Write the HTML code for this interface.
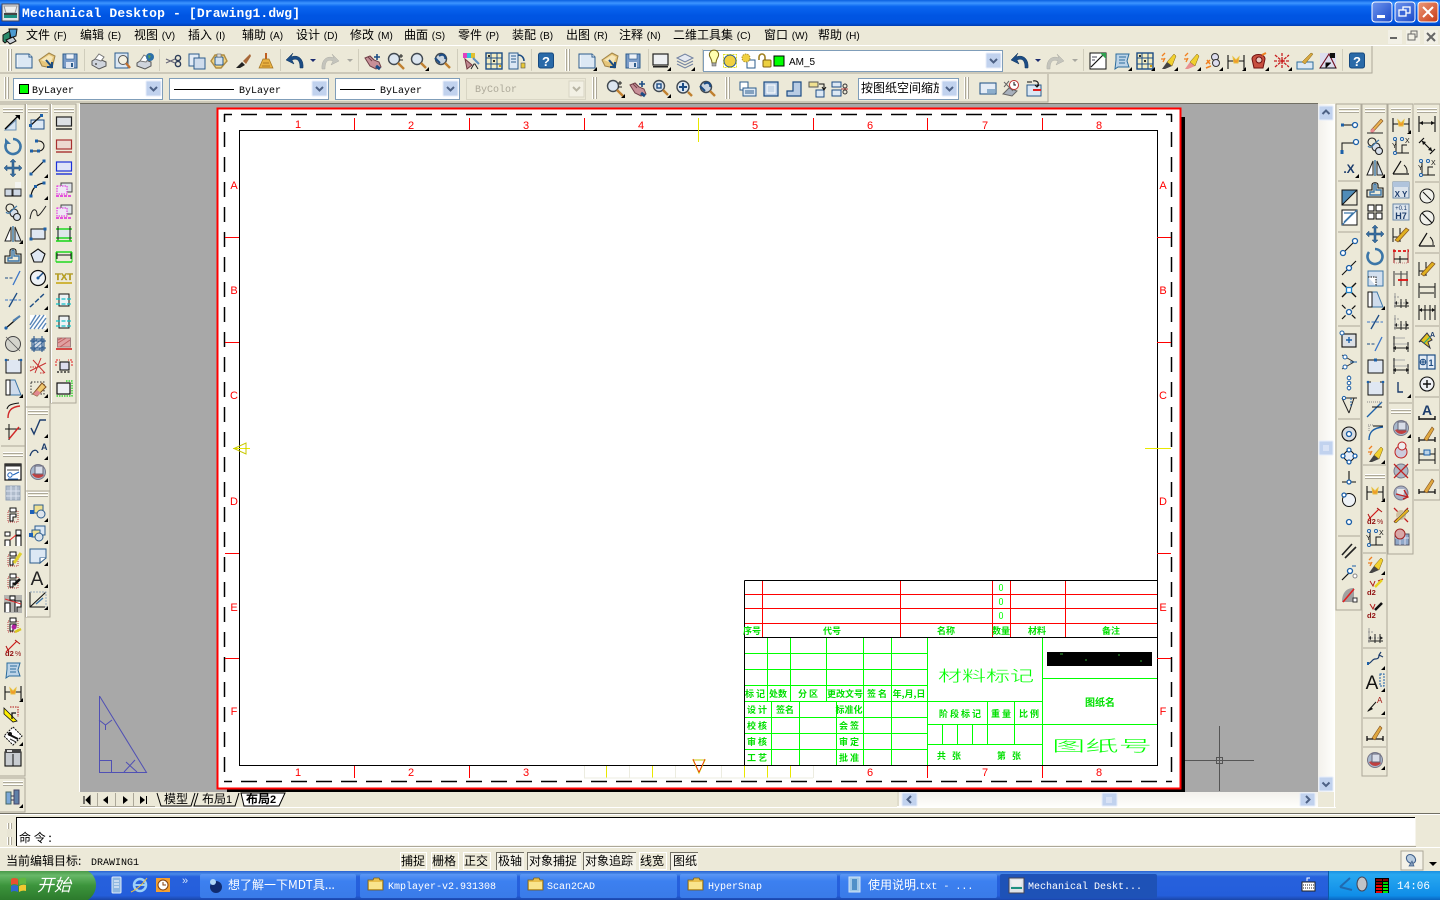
<!DOCTYPE html>
<html lang="zh">
<head>
<meta charset="utf-8">
<title>Mechanical Desktop</title>
<style>
html,body{margin:0;padding:0;width:1440px;height:900px;overflow:hidden;background:#ece9d8}
svg{display:block;position:absolute;left:0;top:0}
text{font-family:"WenQuanYi Zen Hei","Noto Sans CJK SC",sans-serif;font-size:12px;fill:#000}
.m{font-family:"Liberation Mono",monospace}
.s{font-family:"Liberation Sans",sans-serif}
.g{fill:#00ff00;font-size:9px;text-anchor:middle}
.gb{fill:#00e000;font-size:9px;text-anchor:middle;font-weight:bold}
.r{fill:#ff0000;font-family:"Liberation Sans",sans-serif;font-size:11px;text-anchor:middle}
.tb{fill:#fff;font-size:11px}
</style>
</head>
<body>
<svg width="1440" height="900" viewBox="0 0 1440 900" xmlns="http://www.w3.org/2000/svg" shape-rendering="geometricPrecision">
<defs>
<linearGradient id="tt" x1="0" y1="0" x2="0" y2="1"><stop offset="0" stop-color="#0a5fe0"/><stop offset=".12" stop-color="#3d95ff"/><stop offset=".25" stop-color="#0a66f0"/><stop offset=".6" stop-color="#0055e3"/><stop offset=".88" stop-color="#0054e0"/><stop offset="1" stop-color="#003cb0"/></linearGradient>
<linearGradient id="task" x1="0" y1="0" x2="0" y2="1"><stop offset="0" stop-color="#2a62d0"/><stop offset=".1" stop-color="#4a8ae8"/><stop offset=".2" stop-color="#2761dd"/><stop offset=".85" stop-color="#245edb"/><stop offset="1" stop-color="#1a46a8"/></linearGradient>
<linearGradient id="start" x1="0" y1="0" x2="0" y2="1"><stop offset="0" stop-color="#4a9a4a"/><stop offset=".15" stop-color="#68b868"/><stop offset=".5" stop-color="#3c943c"/><stop offset="1" stop-color="#2c7a2c"/></linearGradient>
<linearGradient id="tray" x1="0" y1="0" x2="0" y2="1"><stop offset="0" stop-color="#1a90e0"/><stop offset=".12" stop-color="#28a8f0"/><stop offset=".85" stop-color="#0f8de8"/><stop offset="1" stop-color="#0a66c0"/></linearGradient>
<linearGradient id="btn" x1="0" y1="0" x2="0" y2="1"><stop offset="0" stop-color="#5a96f5"/><stop offset=".3" stop-color="#3c80f0"/><stop offset="1" stop-color="#3a7be8"/></linearGradient>
<linearGradient id="wb" x1="0" y1="0" x2="1" y2="1"><stop offset="0" stop-color="#6f96ee"/><stop offset="1" stop-color="#1a48c8"/></linearGradient>
<linearGradient id="wc" x1="0" y1="0" x2="1" y2="1"><stop offset="0" stop-color="#ec9a7a"/><stop offset="1" stop-color="#c83a14"/></linearGradient>
<linearGradient id="sbv" x1="0" y1="0" x2="1" y2="0"><stop offset="0" stop-color="#f3f1ec"/><stop offset="1" stop-color="#fefefb"/></linearGradient>
<linearGradient id="sbh" x1="0" y1="0" x2="0" y2="1"><stop offset="0" stop-color="#f3f1ec"/><stop offset="1" stop-color="#fefefb"/></linearGradient>

<!-- helpers -->
<path id="f" d="M6 10L10 10 10 6Z" fill="#000"/>
<g id="grh"><rect x="0" y="0" width="20" height="1" fill="#fff"/><rect x="0" y="1" width="20" height="1" fill="#aca899"/><rect x="0" y="3" width="20" height="1" fill="#fff"/><rect x="0" y="4" width="20" height="1" fill="#aca899"/></g>
<g id="grv"><rect x="0" y="0" width="1" height="22" fill="#fff"/><rect x="1" y="0" width="1" height="22" fill="#aca899"/><rect x="3" y="0" width="1" height="22" fill="#fff"/><rect x="4" y="0" width="1" height="22" fill="#aca899"/></g>
<g id="cb"><rect x="0" y="0" width="15" height="15" rx="1" fill="#c1d2ee" stroke="#e8eefa"/><path d="M4 6L7.5 9.5 11 6" fill="none" stroke="#4d6185" stroke-width="2"/></g>

<!-- standard toolbar -->
<g id="new"><path d="M-8-7H5L8-4V7H-8Z" fill="#dce8f4" stroke="#2c5c8c"/><path d="M5-7V-4H8" fill="#fff" stroke="#2c5c8c"/><path d="M-7 6V-6" stroke="#fff"/></g>
<g id="open"><path d="M-8-1L2-8 8-5 5 7-5 5Z" fill="#e6c67a" stroke="#a08448"/><path d="M-6-1L2-6 6-4 3 3Z" fill="#f5e6b8"/><path d="M-1-1L5 6M5 1V6H0" fill="none" stroke="#1c4c80" stroke-width="2"/></g>
<g id="save"><rect x="-7" y="-7" width="14" height="14" fill="#7b9cc8" stroke="#2c5c8c"/><rect x="-4" y="-7" width="8" height="5" fill="#eef2f8" stroke="#2c5c8c" stroke-width=".6"/><rect x="-4" y="1" width="8" height="6" fill="#dfe6f2"/><rect x="1" y="2" width="2" height="4" fill="#2c5c8c"/></g>
<g id="print"><path d="M-7 0L-2-3 7 1V5L0 8-7 4Z" fill="#cfd4dc" stroke="#555"/><path d="M-4-2L0-7 5-4 2 0Z" fill="#fff" stroke="#777"/><circle cx="-3" cy="3" r="1" fill="#555"/></g>
<g id="prev"><rect x="-7" y="-8" width="13" height="15" fill="#dce8f4" stroke="#2c5c8c"/><circle cx="1" cy="-1" r="4.5" fill="#f4f0e0" stroke="#555"/><path d="M4 2L8 7" stroke="#c07030" stroke-width="2.4"/></g>
<g id="plot"><path d="M-8 2L-2-2 6 1V5L0 8-8 5Z" fill="#cfd4dc" stroke="#555"/><path d="M-5 0L-1-6 4-3 1 1Z" fill="#fff" stroke="#777"/><circle cx="5" cy="-4" r="4" fill="#2c70a8"/><path d="M3-6L6-5 4-2Z" fill="#5aa050"/></g>
<g id="cut"><circle cx="4" cy="-3" r="2.6" fill="none" stroke="#2c3c58" stroke-width="1.4"/><circle cx="4" cy="3" r="2.6" fill="none" stroke="#2c3c58" stroke-width="1.4"/><path d="M1-2L-8 2M1 2L-8-2" stroke="#667" stroke-width="1.2"/></g>
<g id="copy"><rect x="-8" y="-7" width="10" height="12" fill="#e3ecf6" stroke="#2c5c8c"/><rect x="-3" y="-3" width="11" height="11" fill="#cfdcec" stroke="#2c5c8c"/></g>
<g id="paste"><path d="M-8 0L-4-6 5-6 8 0 2 7-3 7Z" fill="#f4d480" stroke="#b08c40" stroke-width="1.4"/><rect x="-4" y="-4" width="8" height="8" rx="1" fill="#cfe0f0" stroke="#2c5c8c"/><rect x="-2" y="-7" width="4" height="3" fill="#ddd" stroke="#555" stroke-width=".5"/></g>
<g id="brush"><path d="M-7 7L-1 1 2 4-3 7Z" fill="#222"/><path d="M0 0L7-7 8-5 3 3Z" fill="#a86838"/></g>
<g id="broom"><rect x="-1" y="-8" width="2" height="7" fill="#c06020"/><path d="M-3-2H3L7 7H-7Z" fill="#e8b040" stroke="#a07020" stroke-width=".7"/><path d="M-3 2H3M-4 5H4" stroke="#b07820"/></g>
<path id="undo" d="M8 7C9-2 3-7-4-4L-2-8-9-1-1 3-3-1C2-3 5-1 5 7Z" fill="#1c4c84" stroke="#12365e" stroke-width=".5"/>
<path id="redo" d="M-8 7C-9-2-3-7 4-4L2-8 9-1 1 3 3-1C-2-3-5-1-5 7Z" fill="#c4c4bc" stroke="#aeaea6" stroke-width=".5"/>
<path id="dn" d="M-3-1H3L0 2Z" fill="#1c2c70"/>
<path id="dng" d="M-3-1H3L0 2Z" fill="#a8a8a0"/>
<g id="pan"><path d="M-8-3L-3-5 1-1 6 1 8 6 3 8-3 5Z" fill="#c89098" stroke="#704048"/><path d="M-5-4L-1 0M-3-5L1-1" stroke="#704048"/><path d="M3 5L7 8" stroke="#1c4c84" stroke-width="3"/><path d="M4-7V-1M1-4H7" stroke="#1c4c84" stroke-width="1.6"/></g>
<g id="zr"><circle cx="-2" cy="-2" r="5.5" fill="#dce6f0" stroke="#404850" stroke-width="1.4"/><path d="M2 2L8 8" stroke="#c08030" stroke-width="2.4"/><path d="M5-7V-3M3-5H7M3-1H7" stroke="#222"/></g>
<g id="zw"><circle cx="-2" cy="-2" r="5.5" fill="#dce6f0" stroke="#404850" stroke-width="1.4"/><path d="M2 2L7 7" stroke="#c08030" stroke-width="2.4"/><use href="#f"/></g>
<g id="zp"><circle cx="-1" cy="-1" r="5.5" fill="#c8d4e0" stroke="#404850" stroke-width="1.4"/><path d="M3 3L8 8" stroke="#c08030" stroke-width="2.4"/><path d="M-7-2L-2 3M-3-4C1-7 4-4 3-1" fill="none" stroke="#1c4c84" stroke-width="2"/></g>
<g id="zf"><circle cx="-1" cy="-1" r="6" fill="#dce6f0" stroke="#404850" stroke-width="1.4"/><path d="M-1-5V3M-5-1H3" stroke="#1c4c84" stroke-width="2"/><path d="M4 4L8 8" stroke="#c08030" stroke-width="2.4"/></g>
<g id="zo"><circle cx="-2" cy="-2" r="5.5" fill="#dce6f0" stroke="#404850" stroke-width="1.4"/><rect x="-4" y="-4" width="4" height="4" fill="none" stroke="#1c4c84" stroke-width="1.4"/><path d="M2 2L7 7" stroke="#c08030" stroke-width="2.4"/><use href="#f"/></g>
<g id="pal"><rect x="-8" y="-8" width="12" height="5" fill="#e040c0"/><rect x="-4" y="-8" width="4" height="5" fill="#30c0e0"/><rect x="0" y="-8" width="4" height="5" fill="#e0c030"/><path d="M-6-2L1 4-4 8Z" fill="#c08890" stroke="#703840"/><path d="M2-3L8 3" stroke="#6090c0" stroke-width="2"/><path d="M0 8L3 3H4L7 8" fill="none" stroke="#222"/></g>
<g id="grd"><rect x="-8" y="-8" width="16" height="16" fill="#f4ecc0" stroke="#1c4c84" stroke-width="1.4"/><path d="M-3-8V8M3-8V8M-8-3H8M-8 3H8" stroke="#1c4c84"/><rect x="-6" y="-6" width="2" height="2" fill="#303030"/><rect x="-1" y="-1" width="2" height="2" fill="#303030"/><rect x="5" y="4" width="2" height="2" fill="#d0a010"/></g>
<g id="bl"><rect x="-8" y="-8" width="9" height="16" fill="#dce8f4" stroke="#2c5c8c"/><path d="M-6-5H-1M-6-2H-1M-6 1H-1" stroke="#2c5c8c"/><path d="M1-6C5-6 7-3 7 0" fill="none" stroke="#1c4c84" stroke-width="1.6"/><rect x="4" y="2" width="4" height="5" fill="#e8c838" stroke="#555" stroke-width=".6"/></g>
<g id="hlp"><rect x="-7.5" y="-8" width="15" height="15" rx="2" fill="#2a6aa8" stroke="#174a80"/><text x="0" y="5" text-anchor="middle" class="s" style="font-size:13px;font-weight:bold;fill:#fff">?</text></g>
<g id="mon"><rect x="-8" y="-7" width="15" height="11" fill="#eef0f2" stroke="#222" stroke-width="1.2"/><rect x="-8" y="5" width="15" height="1.500" fill="#222"/><use href="#f"/></g>
<g id="lay"><path d="M-8-3L0-7 8-3 0 1Z" fill="#e4e8f0" stroke="#7080a0"/><path d="M-8 0L0 4 8 0M-8 3L0 7 8 3" fill="none" stroke="#7080a0"/><use href="#f"/></g>
<g id="bulb"><path d="M-4-3A4.6 4.6 0 1 1 4-3C3-1 2 0 2 3H-2C-2 0-3-1-4-3Z" fill="#ffffb0" stroke="#786810" stroke-width="1"/><rect x="-2" y="3" width="4" height="3" fill="#aaa" stroke="#555" stroke-width=".5"/></g>
<g id="sun"><rect x="-6.5" y="-6.5" width="13" height="13" fill="none" stroke="#e0e020" stroke-dasharray="2 1"/><circle r="6" fill="#f0d040" stroke="#2c5c8c"/></g>
<g id="sun2"><rect x="-1" y="-1" width="8" height="8" fill="#fff" stroke="#2c5c8c"/><circle cx="-2" cy="-3" r="4" fill="#f0d040" stroke="#b09020" stroke-dasharray="1.5 1"/></g>
<g id="lock"><path d="M-6-1V-4A3 3 0 0 1 0-4V-1" fill="none" stroke="#a08020" stroke-width="1.6"/><rect x="-2" y="-1" width="8" height="7" rx="1" fill="#ecd040" stroke="#806010"/></g>

<!-- CAD draw -->
<g id="a1"><path d="M-8 7L3-3V7Z" fill="#d8e4f0" stroke="#6a90b4"/><path d="M-8 6L5-7" stroke="#000" stroke-width="1.3"/><path d="M2-8H7V-3Z" fill="#000"/></g>
<path id="rot" d="M0-7A7.5 7.5 0 1 1-6-4" fill="none" stroke="#3c76a8" stroke-width="2.6"/>
<g id="rota"><use href="#rot"/><path d="M-8-8V-2H-2Z" fill="#3c76a8"/></g>
<path id="mv" d="M0-9L3-6H1V-1H6V-3L9 0 6 3V1H1V6H3L0 9-3 6H-1V1H-6V3L-9 0-6-3V-1H-1V-6H-3Z" fill="#386ea0" stroke="#244c78" stroke-width=".5"/>
<g id="arr"><rect x="-8" y="-1" width="7" height="7" fill="#cfd8e4" stroke="#333"/><rect x="0" y="-1" width="8" height="7" fill="#cfd8e4" stroke="#333"/><path d="M-8 6H8" stroke="#000"/><rect x="2" y="-8" width="6" height="6" fill="#f4f4f0"/></g>
<g id="cpc"><circle cx="-3" cy="-4" r="4" fill="none" stroke="#222" stroke-width="1.1"/><circle cx="1" cy="1" r="4" fill="#d8e0ea" stroke="#222" stroke-width="1.1"/><circle cx="4" cy="5" r="3.5" fill="#d8e0ea" stroke="#222" stroke-width="1.1"/><path d="M-7 0C-4 4-2-2 4-6" fill="none" stroke="#3c76a8" stroke-width="1.2"/></g>
<g id="mir"><path d="M-2-7V7H-8Z" fill="#fff" stroke="#222"/><path d="M0-8V8" stroke="#3c76a8" stroke-width="1.4"/><path d="M2-7V7H8Z" fill="#d8e4f0" stroke="#222"/><use href="#f"/></g>
<g id="off"><path d="M-8 7V0H-3V-5C-3-8 3-8 3-5V-2H8V7Z" fill="none" stroke="#111" stroke-width="1.1"/><path d="M-5 5V2H-1V-5C-1-6 1-6 1-5V0H6V5Z" fill="none" stroke="#3c76a8" stroke-width="1.4"/></g>
<g id="bk1"><path d="M-8 0H0" stroke="#1c4c84" stroke-dasharray="3 1.5"/><path d="M0 7L7-7" stroke="#3c76c8" stroke-width="1.3"/></g>
<g id="bk2"><path d="M-8 0H8" stroke="#3c76c8" stroke-dasharray="3 1.5"/><path d="M-4 7L4-7" stroke="#1c4c84" stroke-width="1.3"/></g>
<g id="pl"><path d="M-7 6L7-6" stroke="#111" stroke-width="1.3"/><circle cx="-7" cy="6" r="1.6" fill="#1c60a8"/><path d="M0-1L7-6" stroke="#5080b0" stroke-width="2"/></g>
<g id="cg"><circle r="7.5" fill="#d4d4cc" stroke="#444" stroke-width="1"/><path d="M-7-7L7 7" stroke="#555" stroke-width=".8"/></g>
<g id="bx"><rect x="-7" y="-6" width="15" height="13" fill="#dfe7f2"/><path d="M-7-6V7H8V-6" fill="none" stroke="#111"/><path d="M-7-6H-4M5-6H8" stroke="#111"/><circle cx="-7" cy="-6" r="1.3" fill="#1c60a8"/><circle cx="8" cy="-6" r="1.3" fill="#1c60a8"/></g>
<g id="bx2"><rect x="-7" y="-6" width="15" height="13" fill="#dfe7f2" stroke="#111"/><rect x="-1" y="-7.5" width="3" height="3" fill="#1c60a8"/></g>
<g id="trp"><path d="M-7-8V7H8L2-8Z" fill="#cfdcec" stroke="#3c76a8"/><path d="M-7-8V7H-3V-8Z" fill="#fff" stroke="#111"/><use href="#f"/></g>
<g id="fil"><path d="M-6-1C-5-5-2-6 6-7" fill="none" stroke="#111"/><path d="M-5 8C-5 1-2-3 7-4" fill="none" stroke="#d02828" stroke-width="1.4"/></g>
<g id="cha"><path d="M-8-3H8M-4-8V8" stroke="#111"/><path d="M-4 7L6-5" stroke="#d02828" stroke-width="1.4"/></g>
<g id="rln"><rect x="-7" y="-3" width="13" height="9" fill="#dce8f4" stroke="#1c4c84"/><path d="M-8 3L4-8" stroke="#111" stroke-width="1.2"/><rect x="2" y="-9" width="3" height="3" fill="#1c60a8"/><rect x="-9" y="1" width="3" height="3" fill="#1c60a8"/></g>
<g id="hook"><path d="M-7 5H1A5 5 0 0 0 1-5H-2" fill="none" stroke="#111" stroke-width="1"/><rect x="-8" y="3.5" width="3" height="3" fill="#1c60a8"/><rect x="-1" y="3.5" width="3" height="3" fill="#1c60a8"/><rect x="-3" y="-6.5" width="3" height="3" fill="#1c60a8"/></g>
<g id="ln"><path d="M-7 6L6-7" stroke="#111" stroke-width="1.2"/><rect x="-8.5" y="4.5" width="3" height="3" fill="#1c60a8"/><rect x="4.5" y="-8.5" width="3" height="3" fill="#1c60a8"/><use href="#f"/></g>
<g id="arc"><path d="M-7 6C-6-2-1-6 6-7" fill="none" stroke="#111" stroke-width="1.2"/><rect x="-8.5" y="4.5" width="3" height="3" fill="#1c60a8"/><rect x="-4" y="-5" width="3" height="3" fill="#1c60a8"/><rect x="4.5" y="-8.5" width="3" height="3" fill="#1c60a8"/><use href="#f"/></g>
<path id="spl" d="M-8 7C-6-6-1-3-1 2S4 0 8-6" fill="none" stroke="#222" stroke-width="1"/>
<g id="rc"><rect x="-7" y="-5" width="14" height="10" fill="#dfe7f2" stroke="#111" stroke-width="1"/><rect x="-8.5" y="3.5" width="3" height="3" fill="#1c60a8"/><rect x="5.5" y="-6.5" width="3" height="3" fill="#1c60a8"/></g>
<path id="pen" d="M0-7L7-2 4 6H-4L-7-2Z" fill="#dfe7f2" stroke="#111" stroke-width="1.1"/>
<g id="gau"><circle r="7.5" fill="#eef2f6" stroke="#111" stroke-width="1.2"/><path d="M0 0L5-5" stroke="#1c4c84" stroke-width="1.4"/><circle r="1.5" fill="#1c60a8"/><use href="#f"/></g>
<g id="dsh"><path d="M-8 7L7-7" stroke="#1c4c84" stroke-width="1.4" stroke-dasharray="5 2"/><use href="#f"/></g>
<g id="hat"><rect x="-8" y="-7" width="16" height="14" fill="#fff"/><path d="M-8 3L-2-7M-8 7L2-7M-4 7L6-7M0 7L8-4M4 7L8 1" stroke="#5a86b8" stroke-width="1.4"/><use href="#f"/></g>
<g id="hb"><rect x="-6" y="-5" width="12" height="11" fill="#d4dce8" stroke="#1c4c84"/><path d="M-6-1L0-5M-6 3L4-5M-4 6L6-3M0 6L6 2" stroke="#5a80a8"/><path d="M-4-8V8M4-8V8M-8-3H8M-8 4H8" stroke="#1c4c84"/></g>
<g id="rx"><path d="M-8 5L8-3M-5-6L7 7M-3 7L3-8" stroke="#c83030"/><path d="M-8 1H-2M2 7H7" stroke="#c83030" stroke-dasharray="1.5 1"/></g>
<g id="era"><rect x="-7" y="-6" width="13" height="12" fill="none" stroke="#333" stroke-dasharray="1.5 1.5"/><path d="M-5 6L4-5 8-1-1 8Z" fill="#f0c870" stroke="#805020"/><path d="M-5 6L-1 2 3 5-1 8Z" fill="#e08890"/><use href="#f"/></g>
<!-- col3 -->
<g id="c1"><rect x="-7.5" y="-6" width="15" height="9" fill="#dce0e4" stroke="#222" stroke-width="1.2"/><path d="M-8 6H8" stroke="#222" stroke-width="1.4"/></g>
<g id="c2"><rect x="-7.5" y="-6" width="15" height="9" fill="#ecd8d0" stroke="#a83030" stroke-width="1.2"/><path d="M-8 6H8" stroke="#a83030" stroke-width="1.4"/></g>
<g id="c3"><rect x="-7.5" y="-6" width="15" height="9" fill="#e0e4f8" stroke="#1c30d8" stroke-width="1.2"/><path d="M-8 6H8" stroke="#1c30d8" stroke-width="1.4"/></g>
<g id="c4"><rect x="-3" y="-7" width="11" height="9" fill="#dfe4ea" stroke="#444"/><rect x="-7" y="-4" width="10" height="8" fill="#efe8f4" stroke="#e020e0" stroke-dasharray="1.5 1"/><path d="M-8 6H8" stroke="#e020e0" stroke-dasharray="3 1" stroke-width="1.4"/></g>
<g id="c5"><rect x="-7" y="-5" width="14" height="9" fill="#dfe7ea"/><path d="M-8-5H8M-8 4H8" stroke="#1fd71f" stroke-width="1.4"/><path d="M-6-8V7M6-8V7" stroke="#111"/><path d="M-8 7H8" stroke="#1fd71f" stroke-width="1.6"/></g>
<g id="c6"><path d="M-7-4V3M7-4V3M-7-1H7" stroke="#111"/><path d="M-8-4H8M-8 6H8" stroke="#1fd71f" stroke-width="1.4"/><path d="M-8-4V6M8-4V6" stroke="#1fd71f"/></g>
<g id="ctx"><text x="0" y="2" text-anchor="middle" class="s" style="font-size:9.5px;font-weight:bold;fill:#c0a818;stroke:#806810;stroke-width:.2">TXT</text><path d="M-8 5H8" stroke="#c8a818" stroke-width="1.6"/></g>
<g id="c8"><rect x="-5" y="-6" width="10" height="12" fill="#eef2f4" stroke="#111"/><path d="M-8-1H8M-8 4H8" stroke="#10c0c8" stroke-dasharray="4 1.5" stroke-width="1.3"/></g>
<g id="c9"><rect x="-6.5" y="-6" width="13" height="9" fill="#e0a0a0" stroke="#a08080"/><path d="M-6-4L-2-6M-6-1L2-6M-4 3L6-4" stroke="#c06060"/><path d="M-8 5H8" stroke="#d02020" stroke-width="1.6"/></g>
<g id="c10"><rect x="-4" y="-4" width="9" height="8" fill="#dde" stroke="#111" stroke-width="1.1"/><path d="M-8 0V-6H-4M8 0V-6H4" fill="none" stroke="#e02020" stroke-dasharray="2 1"/><path d="M-7 6H7" stroke="#111" stroke-dasharray="2 1.5" stroke-width="1.3"/></g>
<g id="c11"><rect x="-7" y="-5" width="13" height="11" fill="#eef0f2" stroke="#111" stroke-width="1.2"/><path d="M2-7H8V8H-8" fill="none" stroke="#10d010" stroke-dasharray="1.5 1" stroke-width="1.2"/></g>
<!-- col2 lower -->
<g id="chk"><path d="M-7 0L-4 6 2-8 8-8" fill="none" stroke="#1c3c6c" stroke-width="1.4"/><use href="#f"/></g>
<g id="aa"><path d="M-8 6C-6-1-1-1 0 3" fill="none" stroke="#1c3c6c" stroke-width="1.3"/><text x="3" y="0" class="s" style="font-size:9px;font-weight:bold;fill:#1c3c6c">A</text><use href="#f"/></g>
<g id="ball"><circle r="7.5" fill="#a8b8cc" stroke="#778"/><path d="M-6 2A7 7 0 0 0 6 3L0 0Z" fill="#c04040"/><rect x="-3" y="-6" width="8" height="8" fill="#d8dde8" stroke="#667"/><use href="#f"/></g>
<g id="lk1"><rect x="-4" y="-7" width="9" height="8" fill="#f0e090" stroke="#2c5c8c"/><circle cx="3" cy="2" r="4" fill="#dce4ec" stroke="#2c5c8c"/><rect x="-8" y="-2" width="4" height="4" fill="#1c60b8"/><use href="#f"/></g>
<g id="lk2"><rect x="-3" y="-8" width="10" height="9" fill="#dce8f4" stroke="#2c5c8c"/><rect x="-6" y="-4" width="8" height="7" fill="#f0e090" stroke="#2c5c8c"/><circle cx="1" cy="3" r="4" fill="#dce4ec" stroke="#2c5c8c"/><rect x="-9" y="-1" width="4" height="4" fill="#1c60b8"/><use href="#f"/></g>
<g id="lk3"><path d="M-8-7H8V2H2V7H-8Z" fill="#dce8f4" stroke="#2c5c8c"/><path d="M2 2V7L8 2" fill="#fff" stroke="#2c5c8c"/><use href="#f"/></g>
<g id="bA"><text x="-1" y="7" text-anchor="middle" class="s" style="font-size:19px;fill:#222">A</text><use href="#f"/></g>
<g id="dm"><path d="M-8 7L8-8" stroke="#111" stroke-width="1.1"/><path d="M-8-8V7H7" fill="none" stroke="#111"/><path d="M-8-8H8V7" fill="none" stroke="#9ab" stroke-dasharray="2 1"/><path d="M-2 4L5-2" stroke="#3c76a8" stroke-width="1.4"/><use href="#f"/></g>
<!-- col1 lower -->
<g id="d1"><rect x="-8" y="-8" width="16" height="16" fill="#fff" stroke="#111" stroke-width="1.2"/><rect x="-8" y="-8" width="16" height="2.500" fill="#333"/><path d="M-6-2H6" stroke="#444"/><circle cx="-3" cy="3" r="2.2" fill="none" stroke="#1c60b8"/><path d="M0 3L6 0M-5 7H5" stroke="#1c60b8"/></g>
<g id="d2"><rect x="-7" y="-7" width="14" height="14" fill="#b0bccc" stroke="#90a0b4"/><path d="M-7-2H7M-2-7V7M3-7V7M-7 3H7" stroke="#dde4f0"/></g>
<g id="p0"><rect x="-5" y="-5" width="10" height="11" fill="none" stroke="#b84040" stroke-dasharray="1 1"/><rect x="-3" y="-8" width="6" height="4" fill="#fff" stroke="#111"/><path d="M-3-2H3V1H0V5H-3Z" fill="#fff" stroke="#111" stroke-width="1.1"/></g>
<g id="p1"><rect x="-8" y="-6" width="5" height="4" fill="#fff" stroke="#111"/><rect x="3" y="-8" width="5" height="5" fill="#fff" stroke="#111"/><path d="M-8 8V2H-3V8M3 8V-2H8V8" fill="#fff" stroke="#111" stroke-width="1.1"/><path d="M-3 2L3-3" stroke="#e02020"/></g>
<g id="p2"><use href="#p0"/><path d="M1 3L8-7" stroke="#e0d030" stroke-width="3"/></g>
<g id="p3"><use href="#p0"/><path d="M1 3L7-3" stroke="#111" stroke-width="2.600"/></g>
<g id="p4"><rect x="-9" y="-9" width="18" height="18" fill="#b4b4b0"/><path d="M-8 8V-1H-3V8M2 8V-3H8V3H4V8" fill="#fff" stroke="#111" stroke-width="1.1"/><path d="M-8-5L8 0" stroke="#e03030"/><rect x="-3" y="-8" width="5" height="4" fill="#fff" stroke="#111"/></g>
<g id="p5"><use href="#p0"/><circle cx="1" cy="1" r="2.5" fill="#b020a0"/><path d="M2 6L8 3" stroke="#d8c820" stroke-width="2.4"/></g>
<g id="dd"><path d="M-7 4L4-7" stroke="#d01818" stroke-width="1.2"/><path d="M-7-2L-4 4M2-8L7-4" stroke="#b01010"/><text x="-8" y="8" class="s" style="font-size:7.5px;fill:#901010;font-weight:bold">d2</text><text x="2" y="8" class="s" style="font-size:7px;fill:#901010">%</text></g>
<g id="scr"><path d="M-6-7H7L5 0 7 6H-4L-7 8-6-1Z" fill="#bcd4e8" stroke="#2c6c9c"/><path d="M-3-4H4M-3-1H3M-3 2H3" stroke="#2c6c9c"/></g>
<g id="brk"><path d="M-8-6V8M8-6V8" stroke="#111" stroke-width="1.1"/><path d="M-8 0H8" stroke="#111"/><path d="M-3-4L0-1 3-4 2 2H-2Z" fill="#f09828" stroke="#e8c040"/><use href="#f"/></g>
<g id="yel"><path d="M-9-6L4 7 0 8-9 0Z" fill="#ffee00" stroke="#111" stroke-width=".8"/><path d="M-3-7H5V3" fill="none" stroke="#b01010" stroke-dasharray="1.5 1"/><path d="M-1 5V-1H3" fill="none" stroke="#111" stroke-width="1.3"/></g>
<g id="dia"><path d="M0-9L9 0 0 9-9 0Z" fill="#fff" stroke="#111" stroke-dasharray="2 1"/><path d="M-5-2L5 3" stroke="#111" stroke-width="2"/><circle cx="-3" cy="-2" r="2" fill="#111"/><path d="M-3 3L3 6" stroke="#333"/><use href="#f"/></g>
<g id="book"><rect x="-8" y="-6" width="16" height="14" fill="#c8ccd0" stroke="#111" stroke-width="1.1"/><rect x="-8" y="-9" width="16" height="4" fill="#444"/><path d="M0-4V8" stroke="#111"/><rect x="-6" y="-8" width="5" height="2" fill="#ddd"/></g>
<g id="bar"><rect x="-7" y="-6" width="5" height="12" fill="#7ca8d8" stroke="#466"/><rect x="1" y="-8" width="5" height="14" fill="#6080a8" stroke="#446"/><path d="M-2-2H1M-2 2H1" stroke="#335"/><use href="#f"/></g>
<!-- tb 1 right -->
<g id="t1"><rect x="-8" y="-8" width="16" height="16" fill="#fff" stroke="#111"/><path d="M-7 6L6-7" stroke="#111" stroke-width="1.2"/><path d="M2-8L8-8 8-2Z" fill="#30a050"/><path d="M-6-4H-1M-6-1H-3" stroke="#445"/></g>
<g id="t2"><use href="#scr"/><use href="#f"/></g>
<g id="t3"><use href="#grd"/><use href="#f"/></g>
<g id="t4"><path d="M-6 8L-1 1 4 5-3 8Z" fill="#444"/><path d="M-1 1L6-7 8-5 4 5Z" fill="#f0d030" stroke="#806010" stroke-width=".5"/><path d="M-6-5L-3-8M-7-2H-3M-5 1L-3-3" stroke="#f08020" stroke-width="1.3"/><use href="#f"/></g>
<g id="t5"><path d="M-6 8L-1 1 4 5-3 8Z" fill="#e89090"/><path d="M-1 1L6-7 8-5 4 5Z" fill="#f0d030" stroke="#806010" stroke-width=".5"/><path d="M-6-5L-3-8M-7-2H-3M-5 1L-3-3" stroke="#f08020" stroke-width="1.3"/><use href="#f"/></g>
<g id="t6"><circle cx="2" cy="-4" r="3.5" fill="#dde" stroke="#333"/><circle cx="3" cy="2" r="3.5" fill="#dde" stroke="#333"/><path d="M-7 3L-3-1M-6-1L-3 3M-7 7L-2 5" stroke="#f08020" stroke-width="1.5"/><use href="#f"/></g>
<g id="t8"><path d="M-7-2C-7-8 6-8 6-2L4 7H-5Z" fill="#c85040" stroke="#701010"/><circle cy="-1" r="3" fill="#e8c8c0" stroke="#701010"/><path d="M3-6L7-8" stroke="#f08020" stroke-width="2"/><use href="#f"/></g>
<g id="t9"><path d="M-7-6L7 6M-7 6L7-6M0-8V8M-8 0H8" stroke="#c82020" stroke-width="1.3" stroke-dasharray="3 1"/><use href="#f"/></g>
<g id="t10"><rect x="-8" y="1" width="16" height="7" fill="#dce8f4" stroke="#2c6c9c"/><path d="M-3 1L6-8 8-7 0 3Z" fill="#d8a840" stroke="#806010" stroke-width=".5"/></g>
<g id="t11"><rect x="-8" y="-8" width="16" height="16" fill="#dde"/><path d="M-8 7L1-7 8 7Z" fill="none" stroke="#701020" stroke-width="1.1"/><path d="M-8 7H8M-2 7V2H3" stroke="#111"/><rect x="2" y="-8" width="5" height="5" fill="#111"/></g>
<g id="s1"><rect x="-8" y="-5" width="16" height="11" fill="#e4ecf6" stroke="#2c5c8c" stroke-width="1.1"/><rect x="-1" y="1" width="8" height="4" fill="#8caecc"/></g>
<g id="s2"><path d="M-8 6L-2 0 6 3 1 8Z" fill="#a8b0bc" stroke="#666"/><path d="M-7-6L2 3M-2-7L-7-1" stroke="#666"/><circle cx="3" cy="-3" r="4.5" fill="#fff" stroke="#c03030"/><path d="M3-6V-3H5" stroke="#111" fill="none"/></g>
<g id="s3"><rect x="-7" y="-3" width="14" height="11" fill="#dce8f4" stroke="#2c5c8c"/><rect x="-1" y="1" width="8" height="2" fill="#e02020"/><path d="M-7-6H-2M-1-7C3-8 6-5 3-2M1-3L3-1 5-3" fill="none" stroke="#111" stroke-width="1.1"/></g>
<g id="v1"><rect x="-8" y="-7" width="8" height="8" fill="#fff" stroke="#2c5c8c"/><rect x="-5" y="-1" width="13" height="8" fill="#dce8f4" stroke="#2c5c8c"/><path d="M-3 2H6M-3 4H6" stroke="#2c5c8c"/></g>
<g id="v2"><rect x="-7" y="-7" width="14" height="14" fill="#b8cce4" stroke="#1c4c84" stroke-width="1.2"/><rect x="-4" y="-4" width="8" height="8" fill="#c8d8e8" stroke="#fff"/></g>
<path id="v3" d="M-7 7V2H-1V-7H7V7Z" fill="#b8cce4" stroke="#1c4c84" stroke-width="1.2"/>
<g id="v4"><rect x="-8" y="-7" width="9" height="5" fill="#f0e090" stroke="#555"/><rect x="-1" y="1" width="8" height="7" fill="#dce8f4" stroke="#1c4c84"/><path d="M2-5H7V0M5-2L7 1 9-2" fill="none" stroke="#111"/></g>
<g id="v5"><rect x="-8" y="-7" width="9" height="5" fill="#dce8f4" stroke="#1c4c84"/><rect x="-8" y="1" width="9" height="6" fill="#dce8f4" stroke="#1c4c84"/><circle cx="5" cy="-3" r="2" fill="none" stroke="#333"/><circle cx="5" cy="3" r="2" fill="none" stroke="#333"/><path d="M1 0H8" stroke="#b04040"/></g>
<!-- right -->
<g id="r1"><path d="M-8 0H5" stroke="#111"/><rect x="-8" y="-1.5" width="3" height="3" fill="#1c60a8"/><circle cx="6" cy="0" r="2.5" fill="#fff" stroke="#1c60a8" stroke-width="1.3"/></g>
<g id="r2"><path d="M-7 6V-3H5" fill="none" stroke="#111"/><rect x="-8.5" y="4" width="3" height="4" fill="#1c60a8"/><circle cx="7" cy="-4" r="2.5" fill="#fff" stroke="#1c60a8" stroke-width="1.3"/></g>
<g id="r3"><text x="0" y="5" text-anchor="middle" class="s" style="font-size:12px;fill:#1c3c6c;font-weight:bold">.X</text><use href="#f"/></g>
<g id="r4"><path d="M-7-7H8L-7 8Z" fill="#508cb8"/><path d="M-7-7H8V8H-7Z" fill="none" stroke="#111"/><path d="M-7 8L8-7" stroke="#111"/></g>
<g id="r5"><rect x="-7" y="-7" width="15" height="15" fill="#fff" stroke="#111"/><path d="M-7 8L8-7M-5-4H4L-5 5" stroke="#3c76a8" fill="none" stroke-width="1.2"/></g>
<g id="r6"><path d="M-6 6L5-5" stroke="#111" stroke-width="1.1"/><circle cx="6" cy="-6" r="2.5" fill="#fff" stroke="#1c60a8" stroke-width="1.3"/><circle cx="-6" cy="6" r="2.5" fill="#fff" stroke="#1c60a8" stroke-width="1.3"/></g>
<g id="r7"><path d="M-7 7L7-7" stroke="#111" stroke-width="1.1"/><circle cx="0" cy="0" r="2.5" fill="#fff" stroke="#1c60a8" stroke-width="1.3"/></g>
<g id="r8"><path d="M-7-7L7 7M-7 7L7-7" stroke="#111" stroke-width="1.4"/><rect x="-2.5" y="-2.5" width="5" height="5" fill="#fff" stroke="#1c80c8" stroke-width="1.3"/></g>
<g id="r9"><path d="M-7-7L7 7M-7 7L7-7" stroke="#111" stroke-width="1.2" stroke-dasharray="5 2"/><circle r="2.5" fill="#fff" stroke="#1c60a8" stroke-width="1.3"/></g>
<g id="r10"><rect x="-7" y="-6" width="14" height="13" fill="#dce0e4" stroke="#111" stroke-width="1.1"/><path d="M-3 0H3M0-3V3" stroke="#1c60a8" stroke-width="1.4"/><circle cx="-7" cy="-7" r="2" fill="#fff" stroke="#1c60a8"/></g>
<g id="r11"><path d="M-7-7L5 0-7 7" fill="none" stroke="#333"/><circle cx="-4" cy="-5" r="2" fill="#fff" stroke="#1c60a8"/><circle cx="-4" cy="5" r="2" fill="#fff" stroke="#1c60a8"/><path d="M1 0H8" stroke="#1c60a8"/></g>
<g id="r12"><path d="M0-8V8" stroke="#888" stroke-dasharray="2 1"/><circle cy="-5" r="1.8" fill="#fff" stroke="#1c60a8"/><circle cy="0" r="1.8" fill="#fff" stroke="#1c60a8"/><circle cy="5" r="1.8" fill="#fff" stroke="#1c60a8"/></g>
<g id="r13"><path d="M-7-7H8M-7-7L0 8M5-7L0 8" fill="none" stroke="#222"/><path d="M2-7L2 2" stroke="#1c60a8" stroke-dasharray="2 1"/><circle cx="-5" cy="-7" r="1.6" fill="#fff" stroke="#1c60a8"/></g>
<g id="r14"><circle r="7" fill="#d8dce0" stroke="#111" stroke-width="1.1"/><circle r="2.5" fill="#fff" stroke="#1c60a8" stroke-width="1.3"/></g>
<g id="r15"><path d="M0-7L7 0 0 7-7 0Z" fill="#e8eef6" stroke="#111"/><circle cy="-6" r="2" fill="#fff" stroke="#1c60a8" stroke-width="1.3"/><circle cx="6" r="2" fill="#fff" stroke="#1c60a8" stroke-width="1.3"/><circle cy="6" r="2" fill="#fff" stroke="#1c60a8" stroke-width="1.3"/><circle cx="-6" r="2" fill="#fff" stroke="#1c60a8" stroke-width="1.3"/></g>
<g id="r16"><path d="M-7 4H7M0-7V4" stroke="#111" stroke-width="1.1"/><circle cy="4" r="2" fill="#fff" stroke="#1c60a8" stroke-width="1.3"/></g>
<g id="r17"><circle r="6.5" fill="#eef2f6" stroke="#111"/><circle cx="-5" cy="-5" r="2" fill="#fff" stroke="#1c60a8" stroke-width="1.3"/></g>
<circle id="r18" r="2.5" fill="#fff" stroke="#1c60a8" stroke-width="1.3"/>
<path id="r19" d="M-7 5L3-6M-4 8L7-3" stroke="#222" stroke-width="1.6"/>
<g id="r20"><path d="M-7 7L1-1" stroke="#111" stroke-width="1.2"/><circle cx="1" cy="-2" r="2.5" fill="#fff" stroke="#1c60a8" stroke-width="1.3"/><circle cx="6" cy="3" r="2" fill="#fff" stroke="#888"/><path d="M3-7H7" stroke="#1c60a8"/></g>
<g id="r21"><path d="M-7 7C-7-2-3-7 5-7L5 7Z" fill="#a0a0a0"/><path d="M-6 7L5-6" stroke="#e02020" stroke-width="1.6"/><rect x="4" y="3" width="4" height="4" fill="#fff" stroke="#333"/></g>
<g id="ed1"><path d="M-4 5L6-6 8-4-2 7Z" fill="#e8b050" stroke="#805020" stroke-width=".6"/><path d="M-5 6L-2 3 0 6-3 8Z" fill="#e88890"/><path d="M-8 8H8" stroke="#222"/></g>
<g id="box4"><rect x="-7" y="-7" width="6" height="6" fill="#fff" stroke="#111" stroke-width="1.1"/><rect x="1" y="-7" width="6" height="6" fill="#fff" stroke="#111" stroke-width="1.1"/><rect x="-7" y="1" width="6" height="6" fill="#fff" stroke="#111" stroke-width="1.1"/><rect x="1" y="1" width="6" height="6" fill="#fff" stroke="#111" stroke-width="1.1"/></g>
<g id="sca"><rect x="-7" y="-7" width="15" height="15" fill="#d4e0ee" stroke="#3c76a8"/><path d="M-7-1H1V8" fill="#fff" stroke="#111" stroke-dasharray="1.5 1"/></g>
<g id="csq"><path d="M-8 8L7-7" stroke="#1c60a8" stroke-width="1.3"/><path d="M-3-2H7" stroke="#111"/><path d="M-8-7H7" stroke="#888" stroke-dasharray="1 1"/></g>
<g id="cfl"><path d="M-6 8C-6 0-2-4 8-5" fill="none" stroke="#1c60a8" stroke-width="1.4"/><path d="M-7-7H-2" stroke="#888" stroke-dasharray="1 1"/><path d="M-6-6V0" stroke="#888" stroke-dasharray="1 1"/><path d="M-2-6H8" stroke="#111"/></g>
<g id="h1"><path d="M-8-8V8M8-8V8M-8-1H8" stroke="#111" stroke-width="1.1"/><path d="M-8-1L-4-3V1ZM8-1L4-3V1Z" fill="#111"/></g>
<g id="h2"><path d="M-8-3L-3-8M3 8L8 3M-5-5L5 5" stroke="#111" stroke-width="1.2" fill="none"/><path d="M-5-5L-1-4-4-1ZM5 5L1 4 4 1Z" fill="#111"/></g>
<g id="xy"><path d="M-5-6V7H8M1 7V-1H6" fill="none" stroke="#111"/><text x="-9" y="2" class="s" style="font-size:7px;fill:#111">Y</text><text x="4" y="-3" class="s" style="font-size:7px;fill:#111">X</text><circle cx="-6" cy="-7" r="1.5" fill="#fff" stroke="#1c60a8"/><circle cx="1" cy="-7" r="1.5" fill="#fff" stroke="#1c60a8"/><circle cx="-6" cy="7" r="1.5" fill="#fff" stroke="#1c60a8"/></g>
<g id="ang"><path d="M-8 6H8M-8 6L0-7" stroke="#111" stroke-width="1.2"/><path d="M3-3A9 9 0 0 1 6 5" fill="none" stroke="#111"/></g>
<g id="tXY"><rect x="-8" y="-8" width="16" height="16" fill="#dce4ec" stroke="#6a88a8"/><rect x="-8" y="-8" width="16" height="5" fill="#b0c4dc"/><text x="0" y="7" text-anchor="middle" class="s" style="font-size:8px;font-weight:bold;fill:#1c3c6c">X Y</text></g>
<g id="tH7"><rect x="-8" y="-8" width="16" height="16" fill="#dce4ec" stroke="#6a88a8"/><text x="0" y="-2" text-anchor="middle" class="s" style="font-size:6px;fill:#1c3c6c">+0.1</text><text x="0" y="7" text-anchor="middle" class="s" style="font-size:9px;font-weight:bold;fill:#1c3c6c">H7</text></g>
<g id="pe"><path d="M-8-6V8M-1-6V8" stroke="#111"/><path d="M-8 3H-1" stroke="#111"/><path d="M-6 6L5-6 8-4-3 8Z" fill="#e0b020" stroke="#805020" stroke-width=".7"/></g>
<g id="rd"><path d="M-7-7V7M7-7V7" stroke="#a02020"/><path d="M-8-5H8" stroke="#e01010" stroke-width="1.8" stroke-dasharray="3 2"/><path d="M-7 3H7" stroke="#111" stroke-width="1.1"/><path d="M-7 7H7" stroke="#c88" stroke-dasharray="1 1"/><path d="M-1 0V7" stroke="#111"/></g>
<g id="rr"><path d="M-7-7V8M0-7V8M6-7V8" stroke="#333"/><path d="M-3 2H7" stroke="#e01010" stroke-width="1.8"/><path d="M-6-4H6" stroke="#555"/></g>
<g id="sd"><path d="M-7-3H-2M-7 3H8" stroke="#999" stroke-dasharray="2 1"/><path d="M-7 3L-4 1V5ZM8 3L5 1V5Z" fill="#222"/><path d="M-7 6H8" stroke="#222"/><path d="M-6-7V8" stroke="#999"/><path d="M0-1V8M5-1V8" stroke="#222"/></g>
<g id="sd2"><path d="M-8-6H4M-8 0H8" stroke="#aaa"/><path d="M-8 4H8" stroke="#222"/><path d="M-8 4L-5 2V6ZM8 4L5 2V6Z" fill="#222"/><path d="M-7-8V8M7-2V8" stroke="#222"/></g>
<g id="ll"><path d="M-3-6V4H2" fill="none" stroke="#1c3c6c" stroke-width="1.4"/><use href="#f"/></g>
<g id="h3"><path d="M-8-7V8M8-7V8" stroke="#111"/><path d="M-8-3H8" stroke="#111"/><path d="M-7 3H7" stroke="#111"/></g>
<g id="h4"><path d="M-8-7V8M8-7V8M-2-7V8M3-7V8" stroke="#111"/><path d="M-8-2H8" stroke="#111"/><path d="M-8-2L-5-4V0ZM8-2L5-4V0Z" fill="#111"/></g>
<g id="qA"><path d="M-8 2L0-7 5 0 1 2 3 8-6 1Z" fill="#e0c020" stroke="#334"/><path d="M-3 3L3-3" stroke="#2a8" stroke-width="1.2"/><text x="3" y="-3" class="s" style="font-size:7px;font-weight:bold;fill:#1c3c6c">A</text></g>
<g id="fcf"><rect x="-8" y="-7" width="16" height="14" fill="#e4ecf6" stroke="#1c4c84" stroke-width="1.2"/><path d="M0-7V7" stroke="#1c4c84"/><circle cx="-4" cy="0" r="2.8" fill="none" stroke="#1c4c84"/><path d="M-7 0H-1M-4-3V3" stroke="#1c4c84"/><text x="4" y="4" text-anchor="middle" class="s" style="font-size:9px;font-weight:bold;fill:#1c4c84">1</text></g>
<g id="cp"><circle r="7" fill="#eef0f4" stroke="#111" stroke-width="1.1"/><path d="M-4 0H4M0-4V4" stroke="#111" stroke-width="1.4"/></g>
<g id="Ab"><text x="0" y="3" text-anchor="middle" class="s" style="font-size:14px;font-weight:bold;fill:#1c3c6c">A</text><path d="M-8 7H8M-8 4V8M8 4V8" stroke="#111" stroke-width="1.4"/></g>
<g id="pn2"><path d="M-8 6H8M-8 3V8M8 3V8" stroke="#111" stroke-width="1.3"/><path d="M-3 5L5-7 7-5 0 7Z" fill="#e0a840" stroke="#805020" stroke-width=".6"/></g>
<g id="hx"><path d="M-8-8V8M8-8V8M-8-2H8M-8 4H8" stroke="#111"/><path d="M-3-6H3V-1H-3Z" fill="#bcd4e8" stroke="#1c60a8"/></g>
<g id="bal"><circle cy="2" r="6" fill="#ccd" stroke="#c02020"/><circle cx="1" cy="-4" r="4" fill="#eee" stroke="#c02020"/></g>
<g id="gx"><circle r="7" fill="#b0b8c4" stroke="#778"/><path d="M-7-7L7 7M-7 7L7-7" stroke="#c02020" stroke-width="1.3"/></g>
<g id="ppl"><circle r="7" fill="#a8b0c4" stroke="#778"/><path d="M-4-4H4L2 3-4 0Z" fill="#e8e8e8"/><path d="M-5 1L7 4M3-3L7 4 2 6" fill="none" stroke="#c02020" stroke-width="1.3"/></g>
<g id="pex"><path d="M-7-7L7 7M-7 7L7-7" stroke="#c02020" stroke-width="1.3"/><circle r="5" fill="#d0c0a0"/><path d="M-7 7L6-6 8-4-5 8Z" fill="#e0b020" stroke="#333" stroke-width=".5"/></g>
<g id="ppl2"><rect x="-6" y="-3" width="14" height="11" fill="#90a8c8" stroke="#556"/><path d="M-6 1H8M-1-3V8M4-3V8" stroke="#dde"/><circle cx="-1" cy="-3" r="5" fill="#d8a8a8" stroke="#a02020"/></g>
<g id="fo2"><path d="M-5-6L-2-1 0-6M3-6L8-8" stroke="#b01818" fill="none"/><path d="M0 0L7-7" stroke="#e8d020" stroke-width="2.5"/><text x="-8" y="8" class="s" style="font-size:7.5px;fill:#901010;font-weight:bold">d2</text></g>
<g id="fo3"><path d="M-5-6L-2-1 0-6" stroke="#b01818" fill="none"/><path d="M0 0L7-7" stroke="#111" stroke-width="2.600"/><text x="-8" y="8" class="s" style="font-size:7.5px;fill:#901010;font-weight:bold">d2</text></g>
<g id="zl"><path d="M-8 4C-4 4-3-1 0-1S4-2 4-5L6-8M4-5L8-3" fill="none" stroke="#1c3c6c" stroke-width="1.2"/><rect x="-8" y="2" width="2" height="3" fill="#1c60a8"/><use href="#f"/></g>
<g id="bA2"><text x="-3" y="7" text-anchor="middle" class="s" style="font-size:19px;fill:#111">A</text><rect x="5" y="-8" width="4" height="12" fill="none" stroke="#1c60a8" stroke-dasharray="2 1"/><use href="#f"/></g>
<g id="ldr"><path d="M-7 6L1-3" stroke="#111"/><path d="M-8 7L-4 2-2 4Z" fill="#111"/><text x="2" y="-2" class="s" style="font-size:8px;fill:#a01010">A</text><use href="#f"/></g>
<!-- folder -->
<g id="fol"><path d="M0 3H5L6 1H11L12 3H15V13H0Z" fill="#e8bf4c" stroke="#7a5c10" stroke-width=".8"/><rect x="1" y="5" width="13" height="7" fill="#f8e48c"/></g>
</defs>

<!-- base -->
<rect width="1440" height="900" fill="#ece9d8"/>

<!-- titlebar -->
<rect width="1440" height="26" fill="url(#tt)"/>
<g transform="translate(2,4)"><rect width="17" height="17" fill="#dfe3e8" stroke="#445"/><path d="M2 2H15L13 9H4Z" fill="#eee" stroke="#999"/><rect x="2" y="11" width="13" height="3" fill="#1c9080"/><rect x="2" y="9" width="13" height="2" fill="#444"/></g>
<text x="22" y="17" class="m" style="font-size:13px;font-weight:bold;fill:#fff" textLength="278">Mechanical Desktop - [Drawing1.dwg]</text>
<rect x="1372" y="2" width="20" height="20" rx="3" fill="url(#wb)" stroke="#fff"/><rect x="1377" y="15" width="8" height="3" fill="#fff"/>
<rect x="1395" y="2" width="20" height="20" rx="3" fill="url(#wb)" stroke="#fff"/><rect x="1403" y="7" width="7" height="6" fill="none" stroke="#fff" stroke-width="1.3"/><rect x="1399" y="10" width="7" height="6" fill="#3a66d8" stroke="#fff" stroke-width="1.3"/>
<rect x="1418" y="2" width="20" height="20" rx="3" fill="url(#wc)" stroke="#fff"/><path d="M1423 7L1433 17M1433 7L1423 17" stroke="#fff" stroke-width="2"/>

<!-- menubar -->
<rect x="0" y="26" width="1440" height="19" fill="#ece9d8"/>
<rect x="0" y="45" width="1440" height="1" fill="#fff"/>
<g transform="translate(2,27)"><path d="M1 8L8 4 8 12 3 16 1 14Z" fill="#2a8a6a" stroke="#111"/><path d="M7 2L15 2 14 9 9 11Z" fill="#4c9ad0" stroke="#111"/><path d="M4 13L11 10 14 14 8 17Z" fill="#c8d0d8" stroke="#111"/></g>
<g>
<text x="26" y="39">文件<tspan class="s" style="font-size:10px" dx="1"> (F)</tspan></text>
<text x="80" y="39">编辑<tspan class="s" style="font-size:10px" dx="1"> (E)</tspan></text>
<text x="134" y="39">视图<tspan class="s" style="font-size:10px" dx="1"> (V)</tspan></text>
<text x="188" y="39">插入<tspan class="s" style="font-size:10px" dx="1"> (I)</tspan></text>
<text x="242" y="39">辅助<tspan class="s" style="font-size:10px" dx="1"> (A)</tspan></text>
<text x="296" y="39">设计<tspan class="s" style="font-size:10px" dx="1"> (D)</tspan></text>
<text x="350" y="39">修改<tspan class="s" style="font-size:10px" dx="1"> (M)</tspan></text>
<text x="404" y="39">曲面<tspan class="s" style="font-size:10px" dx="1"> (S)</tspan></text>
<text x="458" y="39">零件<tspan class="s" style="font-size:10px" dx="1"> (P)</tspan></text>
<text x="512" y="39">装配<tspan class="s" style="font-size:10px" dx="1"> (B)</tspan></text>
<text x="566" y="39">出图<tspan class="s" style="font-size:10px" dx="1"> (R)</tspan></text>
<text x="619" y="39">注释<tspan class="s" style="font-size:10px" dx="1"> (N)</tspan></text>
<text x="673" y="39">二维工具集<tspan class="s" style="font-size:10px" dx="1"> (C)</tspan></text>
<text x="764" y="39">窗口<tspan class="s" style="font-size:10px" dx="1"> (W)</tspan></text>
<text x="818" y="39">帮助<tspan class="s" style="font-size:10px" dx="1"> (H)</tspan></text>
</g>
<rect x="1388" y="30" width="14" height="14" fill="#f2f0e6"/><rect x="1390" y="37" width="7" height="2" fill="#666"/>
<rect x="1406" y="30" width="14" height="14" fill="#f2f0e6"/><rect x="1411" y="31" width="6" height="6" fill="none" stroke="#666"/><rect x="1408" y="34" width="7" height="6" fill="#f2f0e6" stroke="#666"/>
<rect x="1424" y="30" width="14" height="14" fill="#f2f0e6"/><path d="M1427 33L1435 41M1435 33L1427 41" stroke="#666" stroke-width="2"/>

<!-- toolbar 1 -->
<path d="M0 46H1372V73H0Z" fill="#ece9d8"/><path d="M0 73H1372V46" fill="none" stroke="#aca899"/>
<use href="#grv" x="7" y="49"/><use href="#grv" x="565" y="49"/>
<g fill="#d0cdbc"><rect x="84" y="49" width="1" height="22"/><rect x="159" y="49" width="1" height="22"/><rect x="280" y="49" width="1" height="22"/><rect x="358" y="49" width="1" height="22"/><rect x="457" y="49" width="1" height="22"/><rect x="531" y="49" width="1" height="22"/><rect x="648" y="49" width="1" height="22"/><rect x="1083" y="49" width="1" height="22"/><rect x="1342" y="49" width="1" height="22"/><rect x="702" y="49" width="1" height="22"/></g>
<use href="#new" x="24" y="61"/><use href="#open" x="47" y="61"/><use href="#save" x="70" y="61"/><use href="#print" x="99" y="61"/><use href="#prev" x="122" y="61"/><use href="#plot" x="145" y="61"/><use href="#cut" x="174" y="61"/><use href="#copy" x="197" y="61"/><use href="#paste" x="219" y="61"/><use href="#brush" x="243" y="61"/><use href="#broom" x="266" y="61"/><use href="#undo" x="295" y="61"/><use href="#dn" x="313" y="60"/><use href="#redo" x="330" y="62"/><use href="#dng" x="350" y="60"/><use href="#pan" x="373" y="61"/><use href="#zr" x="396" y="61"/><use href="#zw" x="419" y="61"/><use href="#zp" x="442" y="60"/><use href="#pal" x="471" y="61"/><use href="#grd" x="494" y="61"/><use href="#bl" x="517" y="61"/><use href="#hlp" x="546" y="61"/>
<use href="#new" x="587" y="61"/><use href="#f" x="587" y="61"/><use href="#open" x="610" y="61"/><use href="#save" x="633" y="61"/><use href="#mon" x="661" y="61"/><use href="#lay" x="685" y="61"/>
<rect x="703.5" y="50.5" width="299" height="21" fill="#fff" stroke="#7f9db9"/>
<use href="#bulb" x="714" y="60"/><use href="#sun" x="730" y="61"/><use href="#sun2" x="748" y="61"/><use href="#lock" x="765" y="61"/><rect x="774" y="56" width="10" height="10" fill="#00ff00" stroke="#000"/>
<text x="789" y="65" class="s" style="font-size:10px">AM_5</text>
<use href="#cb" x="986" y="53"/>
<use href="#undo" x="1020" y="61"/><use href="#dn" x="1038" y="60"/><use href="#redo" x="1055" y="62"/><use href="#dng" x="1075" y="60"/>
<use href="#t1" x="1098" y="61"/><use href="#t2" x="1122" y="61"/><use href="#t3" x="1145" y="61"/><use href="#t4" x="1168" y="61"/><use href="#t5" x="1191" y="61"/><use href="#t6" x="1213" y="61"/><use href="#brk" x="1236" y="61"/><use href="#t8" x="1259" y="61"/><use href="#t9" x="1282" y="61"/><use href="#t10" x="1305" y="61"/><use href="#t11" x="1328" y="61"/><use href="#hlp" x="1357" y="61"/>

<!-- toolbar 2 -->
<path d="M0 74H1048V102H0Z" fill="#ece9d8"/><path d="M0 102H1048V74" fill="none" stroke="#aca899"/>
<use href="#grv" x="4" y="77"/><use href="#grv" x="592" y="77"/><use href="#grv" x="725" y="77"/><use href="#grv" x="964" y="77"/>
<rect x="13.5" y="78.5" width="149" height="21" fill="#fff" stroke="#7f9db9"/><rect x="19.500" y="84.500" width="9" height="9" fill="#00ff00" stroke="#000"/><text x="32" y="93" class="m" style="font-size:10px">ByLayer</text><use href="#cb" x="146" y="81"/>
<rect x="169.500" y="78.5" width="159" height="21" fill="#fff" stroke="#7f9db9"/><rect x="174" y="89" width="60" height="1" fill="#000"/><text x="239" y="93" class="m" style="font-size:10px">ByLayer</text><use href="#cb" x="312" y="81"/>
<rect x="335.500" y="78.5" width="124" height="21" fill="#fff" stroke="#7f9db9"/><rect x="340" y="89" width="35" height="1" fill="#000"/><text x="380" y="93" class="m" style="font-size:10px">ByLayer</text><use href="#cb" x="443" y="81"/>
<rect x="466.500" y="78.5" width="119" height="21" fill="#ece9d8" stroke="#d8d5c4"/><text x="475" y="92" class="m" style="font-size:10px;fill:#aca899">ByColor</text><rect x="569" y="81" width="15" height="16" fill="#f2f0e4" stroke="#d8d5c4"/><path d="M573 87L576.500 90.500 580 87" fill="none" stroke="#b8b5a4" stroke-width="2"/>
<use href="#zr" x="615" y="88"/><use href="#f" x="615" y="88"/><use href="#pan" x="638" y="88"/><use href="#zo" x="661" y="88"/><use href="#zf" x="684" y="88"/><use href="#zp" x="707" y="88"/>
<use href="#v1" x="748" y="89"/><use href="#v2" x="771" y="89"/><use href="#v3" x="794" y="89"/><use href="#v4" x="817" y="89"/><use href="#v5" x="840" y="89"/>
<rect x="858.500" y="78.5" width="100" height="21" fill="#fff" stroke="#7f9db9"/><text x="861" y="92">按图纸空间缩放</text><rect x="939" y="79" width="19" height="20" fill="#fff"/><use href="#cb" x="942" y="81"/>
<use href="#s1" x="988" y="88"/><use href="#s2" x="1011" y="88"/><use href="#s3" x="1034" y="88"/>

<!-- drawing area -->
<rect x="80" y="104" width="1238" height="688" fill="#a8a8a8"/>
<rect x="80" y="103" width="1238" height="1" fill="#716f64"/>
<rect x="79" y="104" width="1" height="688" fill="#fff"/>
<!-- paper shadow -->
<rect x="1180" y="117" width="5" height="675" fill="#000"/>
<rect x="227" y="789" width="958" height="3" fill="#000"/>
<!-- paper -->
<rect x="217.500" y="108.500" width="963" height="680" fill="#fff" stroke="#ff0000" stroke-width="2"/>
<g stroke="#000" stroke-width="1.500" fill="none">
<path d="M224 114.500H1172M224 781.500H1172" stroke-dasharray="16 9" stroke-dashoffset="8"/>
<path d="M224.500 114V782M1171.500 114V782" stroke-dasharray="15 10" stroke-dashoffset="7"/>
</g>
<rect x="239.500" y="130.500" width="918" height="635" fill="none" stroke="#000"/>
<!-- ticks -->
<g stroke="#ff0000"><path d="M354.500 118V130M469.500 118V130M584.500 118V130M813.500 118V130M927.500 118V130M1042.500 118V130"/><path d="M354.500 766V778M469.500 766V778M1042.500 766V778M927.500 766V778"/><path d="M225 237.500H239M225 342.500H239M225 553.500H239M225 658.500H239M1157 237.500H1171M1157 342.500H1171M1157 553.500H1171M1157 658.500H1171"/></g>
<g stroke="#e8e800"><path d="M698.500 118V142"/><path d="M606.500 766V778M652.500 766V778M744.500 766V778M767.500 766V778M790.500 766V778"/><path d="M1145 448.500H1171M233 448.500H250"/></g>
<g stroke="#ecece0"><path d="M584.500 766V778M629.500 766V778M675.500 766V778M721.500 766V778M813.500 766V778M584 778H813"/></g>
<path d="M693 760H705L699 773Z" fill="none" stroke="#c8c800"/><path d="M693 759L699 772 705 759" fill="none" stroke="#ff0000" stroke-width=".6"/>
<path d="M246 443V454L234 448.500Z" fill="none" stroke="#c8c800"/>
<g class="s">
<text class="r" x="298" y="128">1</text><text class="r" x="411" y="129">2</text><text class="r" x="526" y="129">3</text><text class="r" x="641" y="129">4</text><text class="r" x="755" y="129">5</text><text class="r" x="870" y="129">6</text><text class="r" x="985" y="129">7</text><text class="r" x="1099" y="129">8</text>
<text class="r" x="298" y="776">1</text><text class="r" x="411" y="776">2</text><text class="r" x="526" y="776">3</text><text class="r" x="870" y="776">6</text><text class="r" x="985" y="776">7</text><text class="r" x="1099" y="776">8</text>
<text class="r" x="234" y="189">A</text><text class="r" x="234" y="294">B</text><text class="r" x="234" y="399">C</text><text class="r" x="234" y="505">D</text><text class="r" x="234" y="611">E</text><text class="r" x="234" y="715">F</text>
<text class="r" x="1163" y="189">A</text><text class="r" x="1163" y="294">B</text><text class="r" x="1163" y="399">C</text><text class="r" x="1163" y="505">D</text><text class="r" x="1163" y="611">E</text><text class="r" x="1163" y="715">F</text>
</g>

<!-- title block -->
<path d="M744.500 580.500H1157.500M744.500 580.500V765M744.500 637.500H1157.500" stroke="#000" fill="none"/>
<g stroke="#ff0000" fill="none"><path d="M745 594.500H1157M745 608.500H1157M745 623.500H1157"/><path d="M762.500 581V637M900.500 581V637M992.500 581V637M1010.500 581V637M1065.500 581V637"/></g>
<g stroke="#00ff00" fill="none">
<path d="M745 653.500H927M745 669.500H927M745 685.500H927M745 701.500H1042M745 717.500H927M745 733.500H927M745 749.500H927"/>
<path d="M767.500 638V701M790.500 638V701M826.500 638V701M863.500 638V765M891.500 638V765M927.500 638V765"/>
<path d="M771.500 702V765M799.500 702V765M836.500 702V765"/>
<path d="M1042.500 638V765M1043 678.500H1157M928 724.500H1157M928 744.500H1042"/>
<path d="M987.500 702V744M1014.500 702V744M942.500 725V744M957.500 725V744M972.500 725V744"/>
</g>
<rect x="1047" y="652" width="105" height="14" fill="#000"/>
<path d="M1060 654h3M1085 660h2M1118 655h2M1140 661h2" stroke="#3a3" fill="none"/>
<text class="g" x="1001" y="591">0</text><text class="g" x="1001" y="605">0</text><text class="g" x="1001" y="619">0</text>
<g>
<text class="gb" x="752" y="634">序号</text><text class="gb" x="832" y="634">代号</text><text class="gb" x="946" y="634">名称</text><text class="gb" x="1001" y="634">数量</text><text class="gb" x="1037" y="634">材料</text><text class="gb" x="1111" y="634">备注</text>
<text class="gb" x="755" y="697">标 记</text><text class="gb" x="778" y="697">处数</text><text class="gb" x="808" y="697">分 区</text><text class="gb" x="845" y="697">更改文号</text><text class="gb" x="877" y="697">签 名</text><text class="gb" x="909" y="697">年,月,日</text>
<text class="gb" x="757" y="713">设 计</text><text class="gb" x="785" y="713">签名</text><text class="gb" x="849" y="713">标准化</text>
<text class="gb" x="757" y="729">校 核</text><text class="gb" x="849" y="729">会 签</text>
<text class="gb" x="757" y="745">审 核</text><text class="gb" x="849" y="745">审 定</text>
<text class="gb" x="757" y="761">工 艺</text><text class="gb" x="849" y="761">批 准</text>
<text class="gb" x="960" y="717">阶 段 标 记</text><text class="gb" x="1001" y="717">重 量</text><text class="gb" x="1029" y="717">比 例</text>
<text class="gb" x="949" y="759">共 &#160;&#160;张</text><text class="gb" x="1009" y="759">第 &#160;&#160;张</text>
<text class="gb" x="1100" y="706" style="font-size:10px">图纸名</text>
</g>
<text x="938" y="681" textLength="96" lengthAdjust="spacingAndGlyphs" style="font-size:15px;fill:#00ff00;font-weight:200">材料标记</text>
<text x="1052" y="751" textLength="100" lengthAdjust="spacingAndGlyphs" style="font-size:15px;fill:#00ff00;font-weight:200">图纸号</text>

<!-- triangle & crosshair -->
<g fill="none" stroke="#5050b4"><path d="M99.500 696V772.500H146.500L99.500 696"/><path d="M99.500 760.500H111.500V772.500"/><path d="M99 720L105.500 725 112 720M105.500 725V730"/><path d="M124 772L135 760M126 762L137 772"/></g>
<g stroke="#555" fill="none"><path d="M1185 760.500H1254M1219.500 726V791"/><rect x="1216.500" y="757.500" width="6" height="6"/></g>

<!-- scrollbars -->
<rect x="1318" y="104" width="16" height="688" fill="url(#sbv)"/>
<g transform="translate(1319,106)"><rect width="14" height="14" rx="1" fill="#c1d2ee" stroke="#e6edfa"/><path d="M3.500 8L7 4.500 10.500 8" fill="none" stroke="#4d6185" stroke-width="2"/></g>
<g transform="translate(1319,441)"><rect width="14" height="14" rx="1" fill="#c1d2ee" stroke="#e6edfa"/><path d="M4 5H10M4 7H10M4 9H10" stroke="#eef3fc"/></g>
<g transform="translate(1319,777)"><rect width="14" height="14" rx="1" fill="#c1d2ee" stroke="#e6edfa"/><path d="M3.500 5.500L7 9 10.500 5.500" fill="none" stroke="#4d6185" stroke-width="2"/></g>
<rect x="80" y="792" width="817" height="14" fill="#ece9d8"/>
<rect x="897" y="792" width="421" height="15" fill="url(#sbh)"/>
<g transform="translate(902,793)"><rect width="15" height="13" rx="1" fill="#c1d2ee" stroke="#e6edfa"/><path d="M9 3L5.500 6.500 9 10" fill="none" stroke="#4d6185" stroke-width="2"/></g>
<g transform="translate(1102,793)"><rect width="15" height="13" rx="1" fill="#c1d2ee" stroke="#e6edfa"/><path d="M5 4V10M7 4V10M9 4V10" stroke="#eef3fc"/></g>
<g transform="translate(1300,793)"><rect width="15" height="13" rx="1" fill="#c1d2ee" stroke="#e6edfa"/><path d="M6 3L9.500 6.500 6 10" fill="none" stroke="#4d6185" stroke-width="2"/></g>
<rect x="897" y="792" width="2" height="14" fill="#e0ddcc"/>
<rect x="80" y="807" width="1256" height="1" fill="#fff"/>
<rect x="1334" y="104" width="1" height="704" fill="#fff"/>

<!-- tabs -->
<g fill="#000"><path d="M84 796V804M86 800L90 796V804Z" stroke="#000"/><path d="M108 796V804L103 800Z"/><path d="M123 796V804L128 800Z"/><path d="M140 796V804L145 800Z"/><path d="M146.500 796V804" stroke="#000"/></g>
<g stroke="#aca899"><path d="M97.500 793V806M115.500 793V806M133.500 793V806M80 806.500H155"/></g>
<path d="M157 793L161 806H191L195 793" fill="#ece9d8" stroke="#000"/>
<path d="M198 793L194 806H235L239 793" fill="#ece9d8" stroke="#000"/>
<path d="M241 793L244 806H279L285 793Z" fill="#fff" stroke="#000"/>
<text x="164" y="803">模型</text><text x="202" y="803">布局<tspan class="s" style="font-size:11px">1</tspan></text><text x="246" y="803" style="font-weight:bold">布局<tspan class="s" style="font-size:11px;font-weight:bold">2</tspan></text>

<!-- command -->
<rect x="0" y="813" width="1440" height="1" fill="#716f64"/><rect x="0" y="814" width="1440" height="1" fill="#fff"/>
<use href="#grv" x="7" y="823"/><rect x="7" y="829" width="5" height="8" fill="#e8e5d4"/>
<rect x="16.500" y="817.500" width="1399" height="28" fill="#fff"/><path d="M16.500 846V817.500H1415" fill="none" stroke="#000"/>
<rect x="17" y="846" width="1399" height="1" fill="#aca899"/><rect x="0" y="847" width="1440" height="1" fill="#fff"/>
<text x="19" y="842">命 令 :</text>

<!-- status -->
<text x="6" y="865">当前编辑目标: </text><text x="91" y="865" class="m" style="font-size:10px">DRAWING1</text>
<g fill="none"><rect x="400.500" y="852.500" width="26" height="17" fill="#ece9d8" stroke="#fff"/><rect x="431.500" y="852.500" width="27" height="17" stroke="#fff"/><rect x="463.500" y="852.500" width="27" height="17" stroke="#fff"/><rect x="639.500" y="852.500" width="27" height="17" stroke="#fff"/></g>
<g fill="#f4f2e8"><rect x="496" y="852" width="28" height="18"/><rect x="527" y="852" width="54" height="18"/><rect x="583" y="852" width="53" height="18"/><rect x="670" y="852" width="28" height="18"/></g>
<path d="M496.500 870V852.500H524M527.500 870V852.500H581M583.500 870V852.500H636M670.500 870V852.500H698" fill="none" stroke="#716f64"/>
<text x="401" y="865">捕捉</text><text x="432" y="865">栅格</text><text x="464" y="865">正交</text><text x="498" y="865">极轴</text><text x="529" y="865">对象捕捉</text><text x="585" y="865">对象追踪</text><text x="640" y="865">线宽</text><text x="673" y="865">图纸</text>
<g transform="translate(1401,851)"><rect width="22" height="19" fill="#f4f2e8" stroke="#aca899"/><ellipse cx="10" cy="8" rx="5" ry="4" transform="rotate(40 10 8)" fill="#b8cce0" stroke="#3c5c88"/><path d="M11 10L13 15H8Z" fill="#7f9ab8" stroke="#3c5c88" stroke-width=".7"/></g>
<path d="M1429 862H1437L1433 866Z" fill="#000"/>

<!-- taskbar -->
<rect x="0" y="871" width="1440" height="29" fill="url(#task)"/>
<path d="M0 871H88Q96 876 96 885T88 900H0Z" fill="url(#start)"/>
<g transform="translate(10,876)"><path d="M1 3Q4 1 8 3V9Q4 7 1 9Z" fill="#e85030"/><path d="M9 3Q12 1 16 2V8Q12 7 9 9Z" fill="#60b840"/><path d="M1 10Q4 8 8 10V16Q4 14 1 16Z" fill="#3068d0"/><path d="M9 10Q12 8 16 9V15Q12 14 9 16Z" fill="#f0c830"/></g>
<text x="37" y="891" style="font-size:17px;font-style:italic;fill:#fff">开始</text>
<g transform="translate(112,877)"><rect width="9" height="16" rx="1" fill="#90b8e0" stroke="#e0ecf8"/><path d="M2 4H7M2 7H7M2 10H7" stroke="#fff"/></g>
<circle cx="140" cy="885" r="6" fill="none" stroke="#9cd0f8" stroke-width="2.500"/><path d="M134 885H146" stroke="#9cd0f8" stroke-width="2"/><path d="M131 892Q140 888 147 878" fill="none" stroke="#f0c040"/>
<rect x="156" y="878" width="14" height="14" fill="#f4a030"/><circle cx="163" cy="885" r="5" fill="#fff" stroke="#804010"/><path d="M163 882V885H166" fill="none" stroke="#804010"/>
<text x="182" y="884" class="s" style="font-size:11px;fill:#cfe0fa">»</text>
<rect x="200" y="874" width="156" height="24" rx="2" fill="url(#btn)"/>
<rect x="360" y="874" width="157" height="24" rx="2" fill="url(#btn)"/>
<rect x="520" y="874" width="157" height="24" rx="2" fill="url(#btn)"/>
<rect x="680" y="874" width="157" height="24" rx="2" fill="url(#btn)"/>
<rect x="840" y="874" width="157" height="24" rx="2" fill="url(#btn)"/>
<rect x="1000" y="874" width="157" height="24" rx="2" fill="#1e52b7"/>
<g transform="translate(209,878)"><circle cx="7" cy="9" r="6" fill="#102c70"/><circle cx="4" cy="4" r="3" fill="#b0d8f8"/></g>
<text x="228" y="889" class="tb" style="font-size:12px">想了解一下MDT具...</text>
<use href="#fol" x="368" y="877"/><text x="388" y="889" class="m tb" style="font-size:10px">Kmplayer-v2.931308</text>
<use href="#fol" x="528" y="877"/><text x="547" y="889" class="m tb" style="font-size:10px">Scan2CAD</text>
<use href="#fol" x="688" y="877"/><text x="708" y="889" class="m tb" style="font-size:10px">HyperSnap</text>
<g transform="translate(849,877)"><rect width="11" height="15" fill="#a0c8e8" stroke="#d0e4f8"/><rect x="3" y="2" width="5" height="11" fill="#5090c8"/></g>
<text x="868" y="889" class="tb" style="font-size:12px">使用说明.<tspan class="m" style="font-size:10px">txt - ...</tspan></text>
<g transform="translate(1009,878)"><rect width="15" height="15" fill="#dfe3e8" stroke="#445"/><path d="M2 2H13L12 8H3Z" fill="#eee"/><rect x="2" y="9" width="11" height="2" fill="#1c9080"/></g>
<text x="1028" y="889" class="m tb" style="font-size:10px">Mechanical Deskt...</text>
<g transform="translate(1302,882)"><rect width="13" height="9" fill="#fff" stroke="#222"/><path d="M1 3H12M1 6H12" stroke="#222" stroke-dasharray="1 1"/><path d="M5-1V-4H8" stroke="#fff" fill="none"/></g>
<rect x="1328" y="871" width="112" height="29" fill="url(#tray)"/><rect x="1328" y="871" width="1" height="29" fill="#0a5aa8"/>
<path d="M1340 887L1350 878M1340 887L1352 890" stroke="#206ab0" stroke-width="2" fill="none"/>
<ellipse cx="1362" cy="884" rx="5" ry="7" fill="#c0c4c8" stroke="#445"/>
<rect x="1375" y="878" width="14" height="15" fill="#000"/>
<rect x="1376" y="879" width="6" height="2" fill="#800"/><rect x="1383" y="879" width="5" height="2" fill="#800"/><rect x="1376" y="882" width="6" height="2" fill="#800"/><rect x="1383" y="882" width="5" height="2" fill="#0c0"/><rect x="1376" y="885" width="6" height="2" fill="#e00"/><rect x="1383" y="885" width="5" height="2" fill="#0e0"/><rect x="1376" y="888" width="6" height="2" fill="#e00"/><rect x="1383" y="888" width="5" height="2" fill="#0e0"/><rect x="1376" y="891" width="6" height="2" fill="#e00"/><rect x="1383" y="891" width="5" height="2" fill="#0e0"/>
<text x="1397" y="889" class="m tb" style="font-size:11px">14:06</text>

<!-- LEFT DOCK -->
<g fill="#ece9d8" stroke="#aca899"><path d="M0 104H25V776H0"/><path d="M26 104H50V617H26Z"/><path d="M51 104H76V403H51Z"/><path d="M0 778H25V812H0"/></g>
<rect x="26" y="104" width="1" height="513" fill="#fff"/><rect x="51" y="104" width="1" height="299" fill="#fff"/>
<path d="M26 407H50M26 491H50M1 446H25" stroke="#aca899"/>
<use href="#grh" x="3" y="108"/><use href="#grh" x="28" y="108"/><use href="#grh" x="54" y="108"/>
<use href="#a1" x="13" y="123"/><use href="#rota" x="13" y="146"/><use href="#mv" x="13" y="168"/><use href="#arr" x="13" y="190"/><use href="#cpc" x="13" y="212"/><use href="#mir" x="13" y="234"/><use href="#off" x="13" y="256"/><use href="#bk1" x="13" y="278"/><use href="#bk2" x="13" y="300"/><use href="#pl" x="13" y="322"/><use href="#cg" x="13" y="344"/><use href="#bx" x="13" y="366"/><use href="#trp" x="13" y="388"/><use href="#fil" x="13" y="410"/><use href="#cha" x="13" y="432"/>
<use href="#grh" x="3" y="452"/>
<use href="#d1" x="13" y="472"/><use href="#d2" x="13" y="493"/><use href="#p0" x="13" y="516"/><use href="#p1" x="13" y="538"/><use href="#p2" x="13" y="560"/><use href="#p3" x="13" y="582"/><use href="#p4" x="13" y="604"/><use href="#p5" x="13" y="626"/><use href="#dd" x="13" y="648"/><use href="#scr" x="13" y="670"/><use href="#brk" x="13" y="692"/><use href="#yel" x="13" y="714"/><use href="#dia" x="13" y="736"/><use href="#book" x="13" y="758"/>
<use href="#grh" x="3" y="781"/><use href="#bar" x="13" y="798"/>

<use href="#rln" x="38" y="123"/><use href="#hook" x="38" y="146"/><use href="#ln" x="38" y="168"/><use href="#arc" x="38" y="190"/><use href="#spl" x="38" y="212"/><use href="#rc" x="38" y="234"/><use href="#pen" x="38" y="256"/><use href="#gau" x="38" y="278"/><use href="#dsh" x="38" y="300"/><use href="#hat" x="38" y="322"/><use href="#hb" x="38" y="344"/><use href="#rx" x="38" y="366"/><use href="#era" x="38" y="388"/>
<use href="#grh" x="28" y="410"/><use href="#chk" x="38" y="428"/><use href="#aa" x="38" y="450"/><use href="#ball" x="38" y="472"/>
<use href="#grh" x="28" y="492"/><use href="#lk1" x="38" y="512"/><use href="#lk2" x="38" y="534"/><use href="#lk3" x="38" y="556"/><use href="#bA" x="38" y="578"/><use href="#dm" x="38" y="600"/>

<use href="#c1" x="64" y="123"/><use href="#c2" x="64" y="146"/><use href="#c3" x="64" y="168"/><use href="#c4" x="64" y="190"/><use href="#c4" x="64" y="212"/><use href="#c5" x="64" y="234"/><use href="#c6" x="64" y="256"/><use href="#ctx" x="64" y="278"/><use href="#c8" x="64" y="300"/><use href="#c8" x="64" y="322"/><use href="#c9" x="64" y="344"/><use href="#c10" x="64" y="366"/><use href="#c11" x="64" y="388"/>

<!-- RIGHT DOCK -->
<g fill="#ece9d8" stroke="#aca899"><path d="M1336 104H1361V610H1336Z"/><path d="M1362 104H1387V776H1362Z"/><path d="M1388 104H1413V554H1388Z"/><path d="M1414 104H1440V500H1414"/></g>
<path d="M1338 181H1360M1338 232H1360M1338 326H1360M1338 419H1360M1338 536H1360M1363 465H1386M1363 553H1386M1363 648H1386M1363 718H1386M1363 747H1386M1389 403H1412M1415 182H1439M1415 253H1439M1415 326H1439M1415 397H1439M1415 470H1439" stroke="#aca899"/>
<use href="#grh" x="1339" y="108"/><use href="#grh" x="1365" y="108"/><use href="#grh" x="1391" y="108"/><use href="#grh" x="1417" y="108"/>
<use href="#r1" x="1349" y="125"/><use href="#r2" x="1349" y="146"/><use href="#r3" x="1349" y="168"/><use href="#r4" x="1349" y="197"/><use href="#r5" x="1349" y="217"/><use href="#r6" x="1349" y="247"/><use href="#r7" x="1349" y="268"/><use href="#r8" x="1349" y="290"/><use href="#r9" x="1349" y="312"/><use href="#r10" x="1349" y="340"/><use href="#r11" x="1349" y="362"/><use href="#r12" x="1349" y="383"/><use href="#r13" x="1349" y="405"/><use href="#r14" x="1349" y="434"/><use href="#r15" x="1349" y="456"/><use href="#r16" x="1349" y="478"/><use href="#r17" x="1349" y="500"/><use href="#r18" x="1349" y="522"/><use href="#r19" x="1349" y="550"/><use href="#r20" x="1349" y="573"/><use href="#r21" x="1349" y="595"/>
<use href="#ed1" x="1375" y="125"/><use href="#cpc" x="1375" y="146"/><use href="#mir" x="1375" y="168"/><use href="#off" x="1375" y="190"/><use href="#box4" x="1375" y="212"/><use href="#mv" x="1375" y="234"/><use href="#rot" x="1375" y="256"/><use href="#sca" x="1375" y="278"/><use href="#trp" x="1375" y="300"/><use href="#bk2" x="1375" y="322"/><use href="#bk1" x="1375" y="344"/><use href="#bx2" x="1375" y="366"/><use href="#bx" x="1375" y="388"/><use href="#csq" x="1375" y="409"/><use href="#cfl" x="1375" y="432"/><use href="#t4" x="1375" y="454"/>
<use href="#grh" x="1365" y="474"/><use href="#brk" x="1375" y="492"/><use href="#dd" x="1375" y="516"/><use href="#xy" x="1375" y="538"/><use href="#t4" x="1375" y="565"/><use href="#fo2" x="1375" y="587"/><use href="#fo3" x="1375" y="610"/><use href="#sd" x="1375" y="635"/><use href="#zl" x="1375" y="660"/><use href="#bA2" x="1375" y="682"/><use href="#ldr" x="1375" y="705"/><use href="#pn2" x="1375" y="733"/><use href="#ball" x="1375" y="760"/>
<use href="#brk" x="1401" y="124"/><use href="#xy" x="1401" y="146"/><use href="#ang" x="1401" y="168"/><use href="#tXY" x="1401" y="190"/><use href="#tH7" x="1401" y="212"/><use href="#pe" x="1401" y="234"/><use href="#rd" x="1401" y="256"/><use href="#rr" x="1401" y="278"/><use href="#sd" x="1401" y="300"/><use href="#sd" x="1401" y="322"/><use href="#sd2" x="1401" y="344"/><use href="#sd2" x="1401" y="366"/><use href="#ll" x="1401" y="388"/>
<use href="#grh" x="1391" y="409"/><use href="#ball" x="1401" y="428"/><use href="#bal" x="1401" y="450"/><use href="#gx" x="1401" y="471"/><use href="#ppl" x="1401" y="493"/><use href="#pex" x="1401" y="515"/><use href="#ppl2" x="1401" y="537"/>
<use href="#h1" x="1427" y="124"/><use href="#h2" x="1427" y="146"/><use href="#xy" x="1427" y="168"/><circle cx="1427" cy="196" r="7" fill="#f0f0ea" stroke="#111"/><path d="M1423 192L1431 200" stroke="#111"/><circle cx="1427" cy="218" r="7" fill="#f0f0ea" stroke="#111"/><path d="M1422 213L1432 223" stroke="#111" stroke-width="1.2"/><use href="#ang" x="1427" y="240"/><use href="#pe" x="1427" y="268"/><use href="#h3" x="1427" y="290"/><use href="#h4" x="1427" y="312"/><use href="#qA" x="1427" y="340"/><use href="#fcf" x="1427" y="362"/><use href="#cp" x="1427" y="384"/><use href="#Ab" x="1427" y="412"/><use href="#pn2" x="1427" y="434"/><use href="#hx" x="1427" y="456"/><use href="#pn2" x="1427" y="486"/>
</svg>
</body>
</html>
